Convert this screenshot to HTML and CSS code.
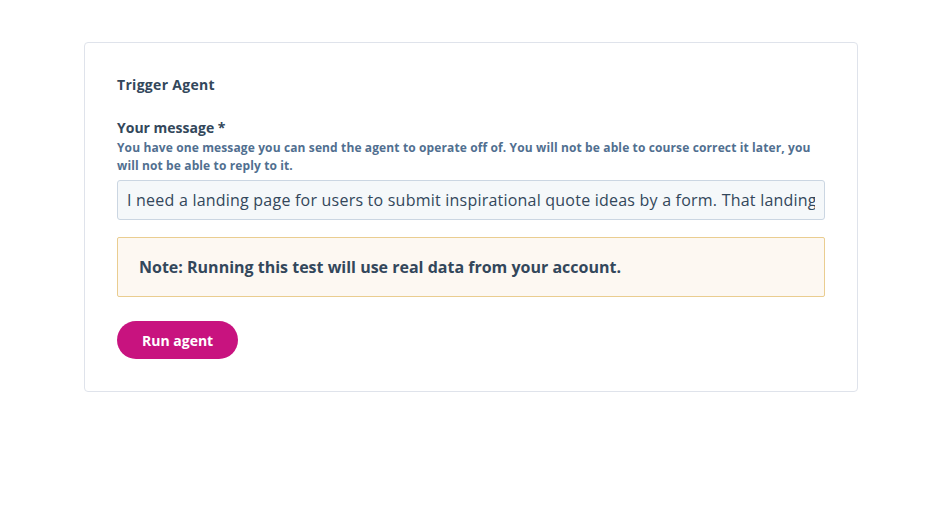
FILE: index.html
```html
<!DOCTYPE html>
<html>
<head>
<meta charset="utf-8">
<link rel="stylesheet" href="styles.css">
</head>
<body>
<div class="card">
  <h2 class="title">Trigger Agent</h2>
  <div class="field">
    <label class="label" for="msg">Your message *</label>
    <p class="help">You have one message you can send the agent to operate off of. You will not be able to course correct it later, you<br>will not be able to reply to it.</p>
    <input id="msg" class="input" type="text" value="I need a landing page for users to submit inspirational quote ideas by a form. That landing page should be simple and easy to use.">
  </div>
  <div class="note">Note: Running this test will use real data from your account.</div>
  <button class="btn" type="button">Run agent</button>
</div>
</body>
</html>
```

FILE: styles.css
```css
* { box-sizing: border-box; }
html, body { margin: 0; padding: 0; background: #ffffff; }
body {
  font-family: "Open Sans", Lato, sans-serif;
  color: #33475b;
  padding: 42px 0 0 84px;
}
.card {
  width: 774px;
  height: 350px;
  border: 1px solid #dfe3eb;
  border-radius: 4px;
  padding: 32px;
  display: flex;
  flex-direction: column;
  align-items: flex-start;
}
.title {
  margin: 0;
  font-size: 14px;
  line-height: 20px;
  font-weight: 700;
  letter-spacing: 0.3px;
}
.field {
  margin-top: 23px;
  width: 100%;
  display: flex;
  flex-direction: column;
}
.label {
  font-size: 14px;
  line-height: 20px;
  font-weight: 700;
}
.help {
  margin: 1px 0 0;
  font-size: 12px;
  line-height: 18px;
  font-weight: 700;
  letter-spacing: 0.12px;
  color: #516f90;
}
.input {
  margin-top: 5px;
  width: 100%;
  height: 40px;
  border: 1px solid #cbd6e2;
  border-radius: 3px;
  background: #f5f8fa;
  padding: 0 9px;
  font-family: inherit;
  font-size: 16px;
  letter-spacing: 0.22px;
  color: #33475b;
  outline: none;
}
.note {
  margin-top: 17px;
  width: 100%;
  height: 60px;
  display: flex;
  align-items: center;
  padding: 0 21px;
  background: #fdf8f2;
  border: 1px solid #eacd90;
  border-radius: 2px;
  font-size: 16px;
  font-weight: 700;
  color: #33475b;
}
.btn {
  margin-top: 24px;
  height: 38px;
  padding: 0 25px;
  border: none;
  border-radius: 19px;
  background: #c8137f;
  color: #ffffff;
  font-family: inherit;
  font-size: 14px;
  font-weight: 700;
}
```
